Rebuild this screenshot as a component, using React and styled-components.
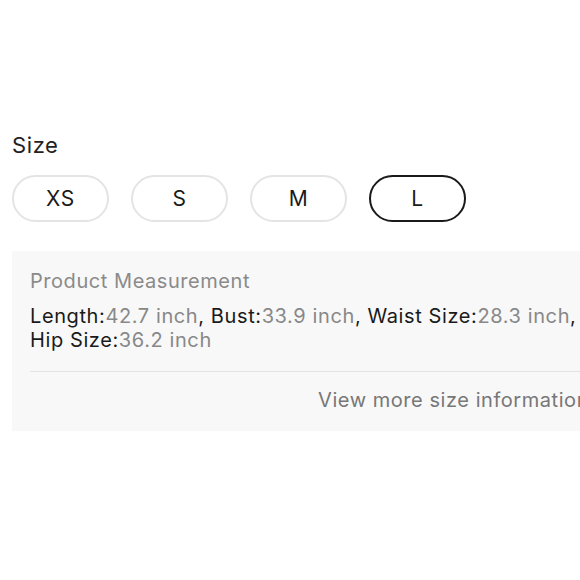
import React, { useState } from 'react';
import styled, { createGlobalStyle } from 'styled-components';

const GlobalStyle = createGlobalStyle`
  body {
    margin: 0;
    background: #fff;
    overflow: hidden;
    font-family: Inter, "Liberation Sans", Arial, sans-serif;
    color: #222;
  }
`;

const Page = styled.div`
  width: 619px;
  box-sizing: border-box;
  padding: 132px 12px 0;
`;

const Label = styled.div`
  font-size: 22px;
  line-height: 26px;
  letter-spacing: 0.6px;
  color: #222;
`;

const SizeRow = styled.div`
  display: flex;
  gap: 22px;
  margin-top: 17px;
`;

const SizeButton = styled.button`
  width: 97px;
  height: 47px;
  box-sizing: border-box;
  border-radius: 24px;
  border: ${p => (p.$active ? '2px solid #1a1a1a' : '2px solid #e4e4e4')};
  background: #fff;
  font-family: inherit;
  font-size: 21px;
  letter-spacing: 0.6px;
  color: #1a1a1a;
  padding: 0;
  cursor: pointer;
`;

const Panel = styled.div`
  margin-top: 29px;
  background: #f8f8f8;
  padding: 18px 18px 19px;
`;

const PanelTitle = styled.div`
  font-size: 20px;
  line-height: 24px;
  letter-spacing: 0.55px;
  color: #8a8a8a;
`;

const Specs = styled.div`
  margin-top: 11px;
  font-size: 20px;
  line-height: 24px;
  letter-spacing: 0.6px;
  color: #1a1a1a;
`;

const Value = styled.span`
  color: #888;
`;

const Divider = styled.div`
  height: 1px;
  background: #e2e2e2;
  margin: 19px 0 16px;
`;

const MoreLink = styled.div`
  text-align: right;
  font-size: 20px;
  line-height: 24px;
  letter-spacing: 0.55px;
  color: #777;
`;

const sizes = ['XS', 'S', 'M', 'L'];

const specs = [
  ['Length', '42.7 inch'],
  ['Bust', '33.9 inch'],
  ['Waist Size', '28.3 inch'],
  ['Hip Size', '36.2 inch'],
];

export default function App() {
  const [selected, setSelected] = useState('L');

  return (
    <Page>
      <GlobalStyle />
      <Label>Size</Label>
      <SizeRow>
        {sizes.map(s => (
          <SizeButton key={s} $active={s === selected} onClick={() => setSelected(s)}>
            {s}
          </SizeButton>
        ))}
      </SizeRow>
      <Panel>
        <PanelTitle>Product Measurement</PanelTitle>
        <Specs>
          {specs.map(([k, v], i) => (
            <React.Fragment key={k}>
              {k}:<Value>{v}</Value>
              {i < specs.length - 1 ? ', ' : ''}
            </React.Fragment>
          ))}
        </Specs>
        <Divider />
        <MoreLink>View more size information</MoreLink>
      </Panel>
    </Page>
  );
}
